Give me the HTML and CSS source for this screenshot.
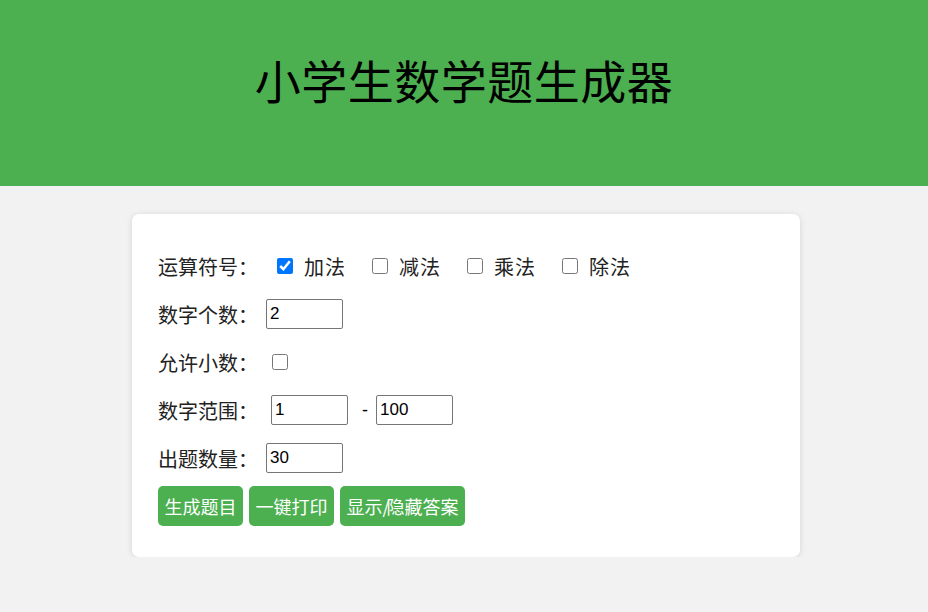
FILE: index.html
```html
<!DOCTYPE html>
<html lang="zh">
<head>
<meta charset="utf-8">
<title>小学生数学题生成器</title>
<link rel="stylesheet" href="styles.css">
</head>
<body>
<header class="header">
  <h1 class="title">小学生数学题生成器</h1>
</header>
<main class="card">
  <div class="row">
    <span class="label">运算符号：</span>
    <label class="opt opt-first"><input type="checkbox" class="cb" checked><span class="opt-text">加法</span></label>
    <label class="opt"><input type="checkbox" class="cb"><span class="opt-text">减法</span></label>
    <label class="opt"><input type="checkbox" class="cb"><span class="opt-text">乘法</span></label>
    <label class="opt"><input type="checkbox" class="cb"><span class="opt-text">除法</span></label>
  </div>
  <div class="row">
    <span class="label">数字个数：</span>
    <input type="text" class="num num-near" value="2">
  </div>
  <div class="row">
    <span class="label">允许小数：</span>
    <input type="checkbox" class="cb cb-single">
  </div>
  <div class="row">
    <span class="label">数字范围：</span>
    <input type="text" class="num num-far" value="1">
    <span class="dash">-</span>
    <input type="text" class="num" value="100">
  </div>
  <div class="row">
    <span class="label">出题数量：</span>
    <input type="text" class="num num-near" value="30">
  </div>
  <div class="buttons">
    <button class="btn">生成题目</button>
    <button class="btn">一键打印</button>
    <button class="btn">显示<span class="slash">/</span>隐藏答案</button>
  </div>
</main>
</body>
</html>
```

FILE: styles.css
```css
html, body {
  margin: 0;
  padding: 0;
}
body {
  background: #f2f2f2;
  font-family: "Noto Sans CJK SC", "Liberation Sans", sans-serif;
  color: #222;
}
.header {
  background: #4caf50;
  height: 186px;
  box-sizing: border-box;
  padding-top: 51px;
}
.title {
  margin: 0;
  text-align: center;
  font-size: 46px;
  line-height: 56px;
  font-weight: 400;
  color: #000;
  letter-spacing: 0.5px;
}
.card {
  display: block;
  width: 668px;
  box-sizing: border-box;
  margin: 28px 0 0 calc(50% - 332px);
  background: #fff;
  border-radius: 7px;
  box-shadow: 0 1px 6px rgba(0, 0, 0, 0.12);
  padding: 34px 26px 31px;
}
.row {
  display: flex;
  align-items: center;
  height: 36px;
  margin-bottom: 12px;
  font-size: 20px;
}
.label {
  width: 100px;
  white-space: nowrap;
}
.opt {
  display: flex;
  align-items: center;
  margin-left: 26px;
}
.opt-first {
  margin-left: 19px;
}
.cb {
  width: 16px;
  height: 16px;
  margin: 0;
  accent-color: #0075ff;
}
.cb-single {
  margin-left: 14px;
}
.opt-text {
  margin-left: 11px;
  letter-spacing: 1px;
}
.num {
  width: 77px;
  height: 30px;
  box-sizing: border-box;
  border: 1px solid #767676;
  border-radius: 2px;
  padding: 0 3px;
  font-family: "Liberation Sans", Arial, sans-serif;
  font-size: 17px;
  color: #000;
  background: #fff;
  margin: 0;
}
.num-near {
  margin-left: 8px;
}
.num-far {
  margin-left: 13px;
}
.dash {
  margin: 0 8px 0 14px;
  font-family: "Liberation Sans", Arial, sans-serif;
  font-size: 18px;
  color: #000;
}
.buttons {
  display: flex;
  gap: 6px;
  margin-top: -2px;
}
.btn {
  height: 40px;
  padding: 0 6.5px;
  border: none;
  border-radius: 5px;
  background: #4caf50;
  color: #fff;
  font-family: "Noto Sans CJK SC", sans-serif;
  font-size: 18px;
  cursor: pointer;
}
.slash {
  letter-spacing: -3px;
}
```
